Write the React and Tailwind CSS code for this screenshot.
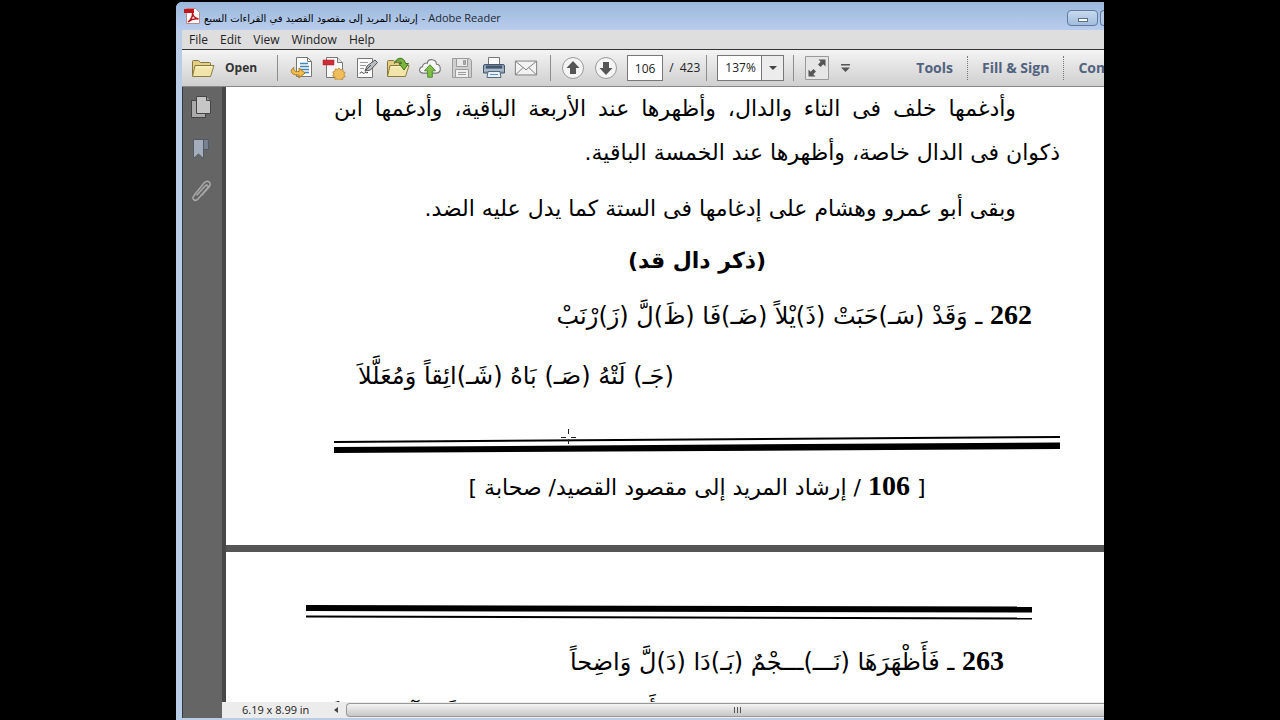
import React from "react";

const SCRIPT = "font-['DejaVu_Sans','Noto_Sans',sans-serif]";

// --- Toolbar icons ---
const FolderIcon = ({ arrow }) => (
  <svg width="24" height="24" viewBox="0 0 24 24" fill="none">
    <path d="M1.500 20V5.500q0-1 1-1h5l2 2h9q1 0 1 1V10" fill="#e3cf84" stroke="#857640" />
    <path d="M1.500 20.500 4 9.500h19L19.500 20.500z" fill="#f2e5a9" stroke="#8d7c41" />
    <path d="M5 11h16" stroke="#fbf5d4" />
    {arrow && (
      <path
        d="M8.500 7.500C10 1 18 0 19.500 7.500h3L18 14l-5-6.500h2.500C15 4.500 11 4 8.500 7.500z"
        fill="#79b63b"
        stroke="#3d7420"
      />
    )}
  </svg>
);

const ExportIcon = () => (
  <svg width="24" height="24" viewBox="0 0 24 24" fill="none">
    <path d="M6.500 1.500h11l4 4v15h-15z" fill="#fafafa" stroke="#777" />
    <path d="M17.500 1.500v4h4" stroke="#777" />
    <path d="M10 7.500h8M10 10.500h9M10 13.500h9M14 16.500h5" stroke="#4588bd" strokeWidth="1.500" />
    <path
      d="M4 11.500c-5 3-3 8 5 7.500v3l6-5-6-5v3.500c-4 .5-6-1-5-4z"
      fill="#f4bd4b"
      stroke="#a8741c"
    />
  </svg>
);

const CreatePdfIcon = () => (
  <svg width="24" height="24" viewBox="0 0 24 24" fill="none">
    <path d="M4.500 1.500h11l5 5v15h-16z" fill="#f8f8f8" stroke="#777" />
    <path d="M15.500 1.500v5h5" fill="#e4e4e4" stroke="#777" />
    <path d="M1 4h11v5H1z" fill="#cf2d38" stroke="#a5202a" strokeWidth=".5" />
    <path
      d="m17 12 1.500 1.800 2.300-.6.200 2.400 2.200 1-1.200 2 1.200 2-2.200.8-.4 2.300-2.200-.6-1.600 1.400-1.500-1.700-2.300.5-.2-2.400-2.200-1 1.300-2-1.100-2 2.200-.8.300-2.200 2.300.5z"
      fill="#efbd5c"
      stroke="#b8842a"
      strokeWidth=".8"
    />
  </svg>
);

const SignIcon = () => (
  <svg width="24" height="24" viewBox="0 0 24 24" fill="none">
    <path d="M3.500 2.500h15v19h-15z" fill="#fbfbfb" stroke="#777" />
    <path d="M6 6.500h8M6 9.500h6M6 12.500h4" stroke="#999" />
    <path d="M6 17.500c2-4 3 2 5-1 1-1 1 1 3 0" stroke="#333" />
    <path d="m11 15 2-5 8-6 2.500 2.500-7 7.500z" fill="#b9bec3" stroke="#555" />
    <path d="m11 15 6-6" stroke="#555" />
  </svg>
);

const CloudIcon = () => (
  <svg width="26" height="24" viewBox="0 0 26 24" fill="none">
    <path
      d="M6 17.500C1 17.500 0 12 5 10.500 5 7 9 6 10 7c1-6 10-5 10 1 5 0 6 9 0 9.500z"
      fill="#f6f6f6"
      stroke="#777"
      strokeWidth="1.200"
    />
    <path d="M13 8.500 19 15h-3.500v7h-5v-7H7z" fill="#82c047" stroke="#43862a" />
  </svg>
);

const SaveIcon = () => (
  <svg width="24" height="24" viewBox="0 0 24 24" fill="none" stroke="#9b9b9b">
    <path d="M2.500 2.500h17l2 2v17h-19z" fill="#cfcfcf" />
    <path d="M6.500 2.500h11v8h-11z" fill="#e9e9e9" />
    <path d="M13.500 4.500h2v4h-2z" fill="#aaa" />
    <path d="M5.500 13.500h13v8h-13z" fill="#efefef" />
    <path d="M8 16.500h8M8 18.500h8" />
  </svg>
);

const PrintIcon = () => (
  <svg width="24" height="24" viewBox="0 0 24 24" fill="none">
    <path d="M6.500 1.500h11v8h-11z" fill="#fafafa" stroke="#777" />
    <path d="M1.500 10q0-1.500 1.500-1.500h18q1.500 0 1.500 1.500v7h-21z" fill="#8fa3b8" stroke="#43566c" />
    <path d="M4 9.500h16v3H4z" fill="#46566a" />
    <path d="M2 14h20" stroke="#c4d0dc" />
    <path d="M6 15.500h12l1 6H5z" fill="#e9f1f8" stroke="#55677c" />
    <path d="M8 18.500h8" stroke="#5a92c4" />
  </svg>
);

const MailIcon = () => (
  <svg width="26" height="24" viewBox="0 0 26 24" fill="none" stroke="#777">
    <path d="M1.500 4.500h23v15h-23z" fill="#f3f3f3" />
    <path d="m2 5 11 9 11-9M2 19l8-7.500M24 19l-8-7.500" />
  </svg>
);

const ArrowIcon = ({ down }) => (
  <svg width="24" height="24" viewBox="0 0 24 24" className={down ? "rotate-180" : ""}>
    <circle cx="12" cy="12" r="10.500" fill="#f4f4f4" stroke="#999" />
    <path d="m12 5 6.500 7H15v6H9v-6H5.500z" fill="#555" />
  </svg>
);

const ExpandIcon = () => (
  <svg width="24" height="24" viewBox="0 0 24 24">
    <path d="M.5.5h23v23H.5z" fill="#e6e6e6" stroke="#999" />
    <path
      d="M13.500 3.500h7v7l-2.200-2.200-2.800 2.700-2.500-2.500 2.700-2.800zM3.500 13.500l2.200 2.200L8.500 13l2.500 2.500-2.700 2.800 2.200 2.200h-7z"
      fill="#555"
    />
  </svg>
);

const AdobeIcon = () => (
  <svg width="16" height="16" viewBox="0 0 16 16" fill="none">
    <path d="M2.500.5h9l4 4v11h-13z" fill="#fdfdfd" stroke="#b88" />
    <path d="M0 1h10v4H0z" fill="#c4161c" />
    <path d="M4 14c3-2 5-6 4.500-9 .5 3 2 5 6 6-4-1-7 0-10.500 3z" stroke="#b3151b" strokeWidth="1.500" />
  </svg>
);

// --- Navigation pane icons ---
const PagesIcon = () => (
  <svg width="22" height="24" viewBox="0 0 22 24" stroke="#444">
    <path d="M1.500 5.500h14v17h-14z" fill="#aaa" />
    <path d="M6.500 1.500h10l4 4v13h-14z" fill="#c6c6c6" />
    <path d="M16.500 1.500v4h4" fill="#999" />
  </svg>
);

const BookmarkIcon = () => (
  <svg width="20" height="24" viewBox="0 0 20 24" stroke="#525a66">
    <path d="M9.500 2.500h8v10h-8z" fill="#76808f" />
    <path d="M2.500 2.500h10v19L7.500 17l-5 4.500z" fill="#a3adbb" />
  </svg>
);

const ClipIcon = () => (
  <svg width="22" height="24" viewBox="0 0 22 24" fill="none" strokeLinecap="round">
    <path
      d="m7 16 8-9c2-2 4 0 2.500 2L8 20c-3 3-7 0-4-3.500L14 4c4-4 8 0 5 4l-7 8"
      stroke="#a9a9a9"
      strokeWidth="1.500"
    />
  </svg>
);

// Double rule printed at the foot and head of the scanned pages
const Rule = ({ thickFirst }) => (
  <svg className="block w-full" height="18" viewBox="0 0 726 18" preserveAspectRatio="none">
    {thickFirst ? (
      <>
        <path d="M0 2 726 3.500v6L0 8z" />
        <path d="M0 12.500 726 14.500v2L0 14.500z" />
      </>
    ) : (
      <>
        <path d="M0 5 726 0v2L0 7z" />
        <path d="M0 11 726 6.500v6.500L0 17z" />
      </>
    )}
  </svg>
);

const Divider = ({ className }) => <span className={`h-[26px] w-px shrink-0 bg-[#8d8d8d] ${className}`} />;

const Num = ({ children }) => (
  <span className="font-['Liberation_Serif',serif] text-[28px] font-bold">{children}</span>
);

const menus = ["File", "Edit", "View", "Window", "Help"];

const tools = [
  { label: "Export", icon: <ExportIcon /> },
  { label: "Create PDF", icon: <CreatePdfIcon /> },
  { label: "Sign", icon: <SignIcon /> },
  { label: "Open from cloud", icon: <FolderIcon arrow /> },
  { label: "Upload", icon: <CloudIcon /> },
  { label: "Save", icon: <SaveIcon /> },
  { label: "Print", icon: <PrintIcon /> },
  { label: "Email", icon: <MailIcon /> },
];

const TitleBar = () => (
  <header className="flex h-7 shrink-0 items-center bg-linear-to-b from-[#9ab8da] to-[#b9cdee] pl-2">
    <AdobeIcon />
    <h1 className="ml-1 flex items-center gap-1 pt-1 text-[11px] whitespace-nowrap text-[#1c2733]">
      <bdi dir="rtl" className={`text-[10px] text-black ${SCRIPT}`}>
        إرشاد المريد إلى مقصود القصيد في القراءات السبع
      </bdi>
      <span>- Adobe Reader</span>
    </h1>
    <button
      aria-label="Minimize"
      className="mt-1 ml-auto flex h-4 w-[31px] items-center justify-center rounded-sm border border-[#5d7ba4] bg-linear-to-b from-[#c6d9ef] to-[#a3bddd]"
    >
      <span className="mt-1 h-1 w-2.5 border border-[#5a6e88] bg-white" />
    </button>
    <button
      aria-label="Maximize"
      className="mt-1 ml-0.5 h-4 w-1 rounded-l-sm border border-r-0 border-[#5d7ba4] bg-[#b4cae5]"
    />
  </header>
);

const MenuBar = () => (
  <nav className="ml-1.5 flex h-5 shrink-0 items-center gap-3 border-b border-[#333] bg-[#dedede] pl-[7px] text-xs text-[#222]">
    {menus.map((menu) => (
      <button key={menu}>{menu}</button>
    ))}
  </nav>
);

const Toolbar = () => (
  <div className="ml-1.5 flex h-[37px] shrink-0 items-center overflow-hidden border-b border-[#888] bg-linear-to-b from-[#f4f4f4] to-[#cfcfcf] pl-[9px] text-xs text-[#222]">
    <button className="flex shrink-0 items-center gap-2.5 font-bold text-[#333]">
      <FolderIcon />
      Open
    </button>
    <Divider className="ml-5" />
    <div className="ml-3 flex shrink-0 gap-2">
      {tools.map((tool) => (
        <button key={tool.label} aria-label={tool.label} className="flex w-6 justify-center">
          {tool.icon}
        </button>
      ))}
    </div>
    <Divider className="ml-3" />
    <button aria-label="Previous page" className="ml-2.5 shrink-0">
      <ArrowIcon />
    </button>
    <button aria-label="Next page" className="ml-[9px] shrink-0">
      <ArrowIcon down />
    </button>
    <input
      aria-label="Page number"
      defaultValue="106"
      className="ml-[9px] h-[26px] w-9 shrink-0 border border-[#777] bg-white text-center"
    />
    <span className="ml-1.5 shrink-0">/&nbsp; 423</span>
    <Divider className="ml-1.5" />
    <div className="relative ml-2.5 h-[26px] w-[67px] shrink-0">
      <select
        aria-label="Zoom"
        className="h-full w-full appearance-none border border-[#777] bg-white pl-[7px]"
      >
        <option>137%</option>
      </select>
      <span className="pointer-events-none absolute inset-y-px right-px flex w-[22px] items-center justify-center border-l border-[#777] bg-[#ececec]">
        <svg width="8" height="4" viewBox="0 0 8 4" fill="#444">
          <path d="M0 0h8L4 4z" />
        </svg>
      </span>
    </div>
    <Divider className="ml-[9px]" />
    <button aria-label="Full screen" className="ml-[11px] shrink-0">
      <ExpandIcon />
    </button>
    <button aria-label="More tools" className="ml-3 shrink-0">
      <svg width="9" height="8" viewBox="0 0 9 8" fill="#555">
        <path d="M0 0h9v1.500H0zM0 3.500h9L4.500 8z" />
      </svg>
    </button>
    <div className="ml-[52px] flex shrink-0 items-center text-sm font-bold text-[#52637f]">
      <button className="px-3.5">Tools</button>
      <button className="border-x border-dotted border-[#777] px-3.5 py-0.5">Fill &amp; Sign</button>
      <button className="px-3.5">Comment</button>
    </div>
  </div>
);

const Sidebar = () => (
  <aside className="flex w-10 shrink-0 flex-col items-center gap-[18px] border-l border-[#2f3a44] bg-[#656565] pt-2 pr-1">
    <button aria-label="Pages">
      <PagesIcon />
    </button>
    <button aria-label="Bookmarks">
      <BookmarkIcon />
    </button>
    <button aria-label="Attachments">
      <ClipIcon />
    </button>
  </aside>
);

const FirstPage = () => (
  <article dir="rtl" className="relative bg-white pr-11 pb-[35px] pl-[108px] text-[22px] leading-[44px]">
    <p className="indent-11 text-justify">
      وأدغمها خلف فى التاء والدال، وأظهرها عند الأربعة الباقية، وأدغمها ابن ذكوان فى الدال خاصة، وأظهرها عند
      الخمسة الباقية.
    </p>
    <p className="mt-3 indent-11">وبقى أبو عمرو وهشام على إدغامها فى الستة كما يدل عليه الضد.</p>
    <h2 className="mt-2 text-center font-bold">(ذكر دال قد)</h2>
    <p className="mt-2.5 pr-7 text-2xl leading-[44px]">
      <Num>262</Num> ـ وَقَدْ (سَـ)حَبَتْ (ذَ)يْلاً (ضَـ)فَا (ظَ)لَّ (زَ)رْنَبْ
    </p>
    <p className="mt-4 pl-6 text-left text-2xl leading-[44px]">
      (جَـ) لَتْهُ (صَـ) بَاهُ (شَـ)ائِقاً وَمُعَلَّلاَ
    </p>
    <div className="mt-[38px] mb-2.5">
      <Rule />
    </div>
    <p className="text-center">
      [ <Num>106</Num> / إرشاد المريد إلى مقصود القصيد/ صحابة ]
    </p>
    {/* text-select cursor */}
    <svg className="absolute top-[342px] left-[335px]" width="16" height="16" viewBox="0 0 16 16" stroke="#222">
      <path d="M0 8.500h5M10 8.500h5M7.500 0v5M7.500 10v5" />
    </svg>
  </article>
);

const SecondPage = () => (
  <article dir="rtl" className="bg-white pt-[51px] pr-[72px] pl-20 text-2xl leading-[44px] whitespace-nowrap">
    <Rule thickFirst />
    <p className="mt-[18px] pr-7">
      <Num>263</Num> ـ فَأَظْهَرَهَا (نَـــ)ـــجْمٌ (بَـ)دَا (دَ)لَّ وَاضِحاً
    </p>
    <p className="mt-2 pl-7 text-left">وَأَدْغَمَ وَرْشٌ (ضَـ)رَّ (ظَـ)مْآنَ وَامْتَلاَ</p>
  </article>
);

const StatusBar = () => (
  <footer className="flex h-4 shrink-0 items-center bg-[#ececec] text-[11px] text-[#222]">
    <span className="w-[104px] shrink-0 pl-5">6.19 x 8.99 in</span>
    <button aria-label="Scroll left" className="w-5 pl-2">
      <svg width="4" height="6" viewBox="0 0 4 6" fill="#444">
        <path d="M4 0v6L0 3z" />
      </svg>
    </button>
    <div className="flex h-3.5 flex-1 items-center justify-center rounded-l-sm border border-r-0 border-[#999] bg-linear-to-b from-[#f4f4f4] to-[#c6c6c6]">
      <span className="ml-6 flex gap-0.5">
        <i className="h-1.5 w-px bg-[#555]" />
        <i className="h-1.5 w-px bg-[#555]" />
        <i className="h-1.5 w-px bg-[#555]" />
      </span>
    </div>
  </footer>
);

export default function App() {
  return (
    <div className="h-screen bg-black px-44 pt-0.5 font-['Open_Sans',sans-serif]">
      <div className="flex h-full flex-col overflow-hidden rounded-tl-md bg-[#b9cde6]">
        <TitleBar />
        <MenuBar />
        <Toolbar />
        <div className="mb-0.5 ml-1.5 flex min-h-0 flex-1">
          <Sidebar />
          <div className="flex min-w-0 flex-1 flex-col">
            <main
              className={`flex min-h-0 flex-1 flex-col gap-[7px] overflow-hidden border-l-4 border-[#484848] bg-[#555] text-black ${SCRIPT}`}
            >
              <FirstPage />
              <SecondPage />
            </main>
            <StatusBar />
          </div>
        </div>
      </div>
    </div>
  );
}
